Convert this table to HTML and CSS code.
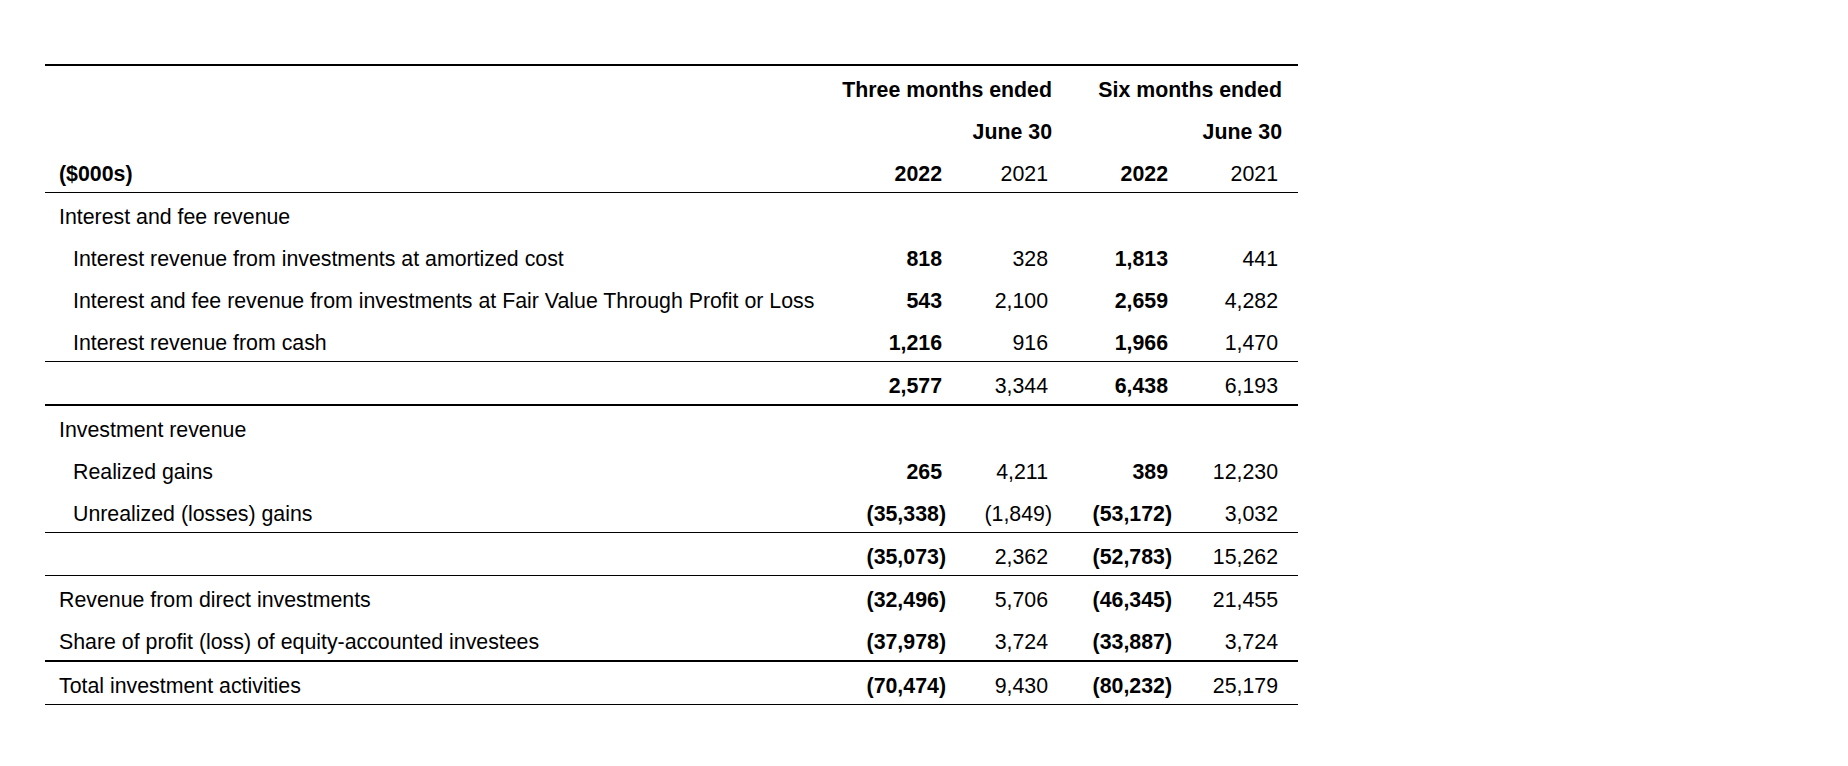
FILE: index.html
```html
<!DOCTYPE html>
<html lang="en">
<head>
<meta charset="utf-8">
<title>Investment activities</title>
<link rel="stylesheet" href="styles.css">
</head>
<body>
<div class="page">
<table class="fin">
  <colgroup>
    <col class="c-label">
    <col class="c1">
    <col class="c2">
    <col class="c3">
    <col class="c4">
  </colgroup>
  <thead>
    <tr class="top">
      <td class="label"></td>
      <th class="span" colspan="2">Three months ended</th>
      <th class="span" colspan="2">Six months ended</th>
    </tr>
    <tr>
      <td class="label"></td>
      <th class="span" colspan="2">June 30</th>
      <th class="span" colspan="2">June 30</th>
    </tr>
    <tr class="rule">
      <th class="label">($000s)</th>
      <th class="num b">2022</th>
      <td class="num">2021</td>
      <th class="num b">2022</th>
      <td class="num">2021</td>
    </tr>
  </thead>
  <tbody>
    <tr>
      <td class="label">Interest and fee revenue</td>
      <td class="num"></td><td class="num"></td><td class="num"></td><td class="num"></td>
    </tr>
    <tr>
      <td class="label ind">Interest revenue from investments at amortized cost</td>
      <td class="num b">818</td><td class="num">328</td><td class="num b">1,813</td><td class="num">441</td>
    </tr>
    <tr>
      <td class="label ind">Interest and fee revenue from investments at Fair Value Through Profit or Loss</td>
      <td class="num b">543</td><td class="num">2,100</td><td class="num b">2,659</td><td class="num">4,282</td>
    </tr>
    <tr class="rule">
      <td class="label ind">Interest revenue from cash</td>
      <td class="num b">1,216</td><td class="num">916</td><td class="num b">1,966</td><td class="num">1,470</td>
    </tr>
    <tr class="rule-thick">
      <td class="label"></td>
      <td class="num b">2,577</td><td class="num">3,344</td><td class="num b">6,438</td><td class="num">6,193</td>
    </tr>
    <tr>
      <td class="label">Investment revenue</td>
      <td class="num"></td><td class="num"></td><td class="num"></td><td class="num"></td>
    </tr>
    <tr>
      <td class="label ind">Realized gains</td>
      <td class="num b">265</td><td class="num">4,211</td><td class="num b">389</td><td class="num">12,230</td>
    </tr>
    <tr class="rule">
      <td class="label ind">Unrealized (losses) gains</td>
      <td class="num b">(35,338<span class="p">)</span></td><td class="num">(1,849<span class="p">)</span></td><td class="num b">(53,172<span class="p">)</span></td><td class="num">3,032</td>
    </tr>
    <tr class="rule">
      <td class="label"></td>
      <td class="num b">(35,073<span class="p">)</span></td><td class="num">2,362</td><td class="num b">(52,783<span class="p">)</span></td><td class="num">15,262</td>
    </tr>
    <tr>
      <td class="label">Revenue from direct investments</td>
      <td class="num b">(32,496<span class="p">)</span></td><td class="num">5,706</td><td class="num b">(46,345<span class="p">)</span></td><td class="num">21,455</td>
    </tr>
    <tr class="rule-thick">
      <td class="label">Share of profit (loss) of equity-accounted investees</td>
      <td class="num b">(37,978<span class="p">)</span></td><td class="num">3,724</td><td class="num b">(33,887<span class="p">)</span></td><td class="num">3,724</td>
    </tr>
    <tr class="rule">
      <td class="label">Total investment activities</td>
      <td class="num b">(70,474<span class="p">)</span></td><td class="num">9,430</td><td class="num b">(80,232<span class="p">)</span></td><td class="num">25,179</td>
    </tr>
  </tbody>
</table>
</div>
</body>
</html>
```

FILE: styles.css
```css
html, body {
  margin: 0;
  padding: 0;
  background: #ffffff;
}

.page {
  padding: 64px 0 0 45px;
}

.fin {
  width: 1253px;
  table-layout: fixed;
  border-collapse: separate;
  border-spacing: 0;
  font-family: "Liberation Sans", Arial, sans-serif;
  font-size: 21.33px;
  line-height: 24px;
  color: #000000;
}

.c-label { width: 785px; }
.c1 { width: 132px; }
.c2 { width: 106px; }
.c3 { width: 120px; }
.c4 { width: 110px; }

.fin th,
.fin td {
  padding: 12px 16px 6px 0;
  font-weight: normal;
  white-space: nowrap;
  vertical-align: middle;
}

.fin .label {
  text-align: left;
  padding-left: 14px;
}

.fin .label.ind {
  padding-left: 28px;
}

.fin th.label {
  font-weight: bold;
}

.fin .span {
  text-align: right;
  font-weight: bold;
  padding-right: 16px;
}

.fin .num {
  text-align: right;
  padding-right: 20px;
}

.fin .b {
  font-weight: bold;
}

.p {
  margin-right: -4px;
}

.top > * {
  border-top: 2px solid #000000;
}

.rule > * {
  border-bottom: 1px solid #000000;
}

.rule-thick > * {
  border-bottom: 2px solid #000000;
}
```
